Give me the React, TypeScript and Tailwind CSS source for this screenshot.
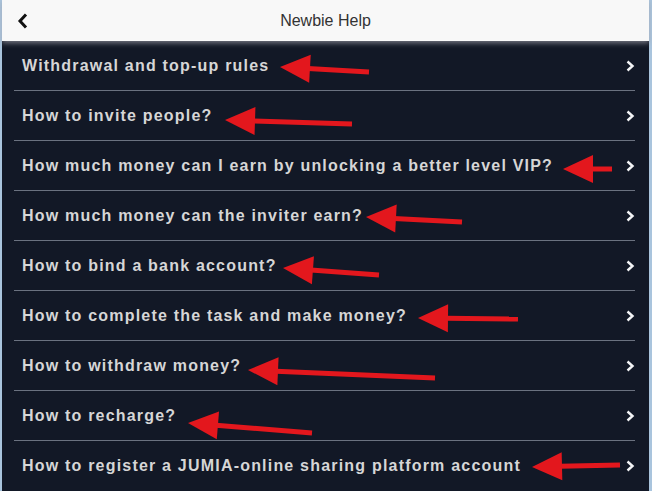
import React from 'react';

const items = [
  'Withdrawal and top-up rules',
  'How to invite people?',
  'How much money can I earn by unlocking a better level VIP?',
  'How much money can the inviter earn?',
  'How to bind a bank account?',
  'How to complete the task and make money?',
  'How to withdraw money?',
  'How to recharge?',
  'How to register a JUMIA-online sharing platform account',
];

// annotation arrows: tip (x1,y1) -> tail end (x2,y2)
const arrows: [number, number, number, number][] = [
  [280, 67, 369, 72],
  [225, 120, 352, 124],
  [563, 169, 612, 169],
  [366, 217, 462, 222],
  [283, 268, 379, 275],
  [418, 318, 518, 319],
  [248, 370, 435, 378],
  [188, 423, 312, 433],
  [532, 467, 620, 465],
];

const Arrow: React.FC<{ a: [number, number, number, number] }> = ({ a }) => {
  const [x1, y1, x2, y2] = a;
  const len = Math.hypot(x2 - x1, y2 - y1);
  const ux = (x2 - x1) / len;
  const uy = (y2 - y1) / len;
  const bx = x1 + ux * 30;
  const by = y1 + uy * 30;
  const h = 14;
  const pts = `${x1},${y1} ${bx - uy * h},${by + ux * h} ${bx + uy * h},${by - ux * h}`;
  return (
    <g>
      <line x1={bx - ux * 2} y1={by - uy * 2} x2={x2} y2={y2} stroke="#e3171d" strokeWidth={5} />
      <polygon points={pts} fill="#e3171d" />
    </g>
  );
};

const Chevron: React.FC = () => (
  <svg width="10" height="14" viewBox="0 0 10 14" className="shrink-0">
    <polyline points="2.5,2.5 7.5,7 2.5,11.5" fill="none" stroke="#f3f4f6" strokeWidth="2.4" />
  </svg>
);

export default function App() {
  return (
    <div className="relative flex w-[652px] h-[491px] overflow-hidden bg-[#a9c4dd] font-['Liberation_Sans',Arial,sans-serif]">
      <div className="ml-[2px] mr-[3px] flex flex-1 flex-col bg-[#121826]">
        <header className="relative z-10 flex h-[43px] items-center bg-[#f8f8f8] shadow-[0_2px_5px_rgba(160,160,170,0.7)]">
          <svg width="14" height="18" viewBox="0 0 14 18" className="ml-[14px]">
            <polyline points="10,2.5 4,9 10,15.5" fill="none" stroke="#111" strokeWidth="3" />
          </svg>
          <h1 className="flex-1 text-center text-[16px] text-[#333] -ml-[14px] pr-[14px]">Newbie Help</h1>
        </header>
        <ul className="ml-[12px] mr-[14px]">
          {items.map((t, i) => (
            <li
              key={t}
              className={`flex h-[50px] items-center justify-between pl-[8px] ${i < items.length - 1 ? 'border-b border-[#6b7280]' : ''}`}
            >
              <span className="text-[16px] font-bold tracking-[1.2px] text-[#d6d6d6]">{t}</span>
              <Chevron />
            </li>
          ))}
        </ul>
      </div>
      <svg className="pointer-events-none absolute inset-0" width="652" height="491">
        {arrows.map((a, i) => (
          <Arrow key={i} a={a} />
        ))}
      </svg>
    </div>
  );
}
